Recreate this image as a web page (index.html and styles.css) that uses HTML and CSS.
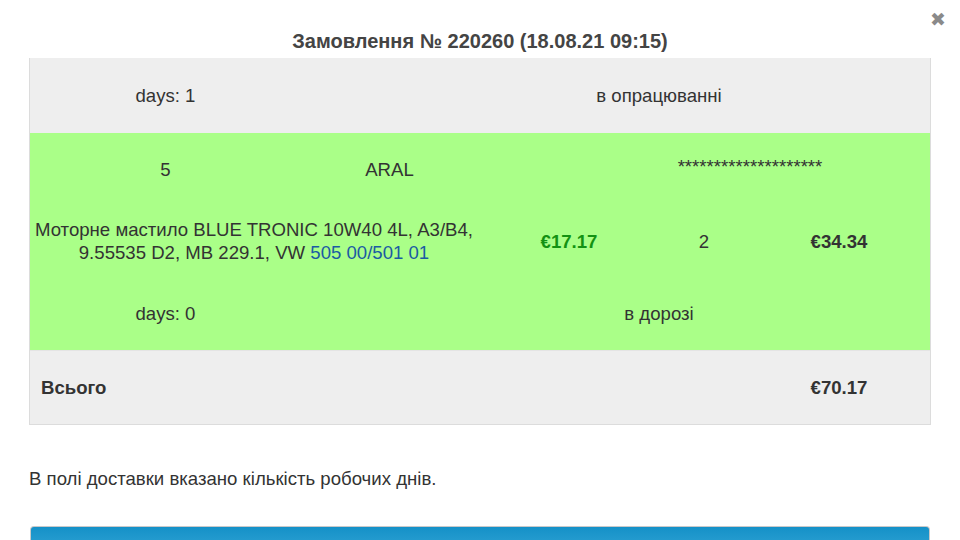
FILE: index.html
```html
<!DOCTYPE html>
<html lang="uk">
<head>
<meta charset="utf-8">
<title>Замовлення № 220260</title>
<link rel="stylesheet" href="styles.css">
</head>
<body>
<div class="modal">
  <span class="close">&#10006;</span>
  <h2 class="title">Замовлення № 220260 (18.08.21 09:15)</h2>
  <div class="table">
    <div class="row gray">
      <div class="cell c1">days: 1</div>
      <div class="cell c3-6">в опрацюванні</div>
    </div>
    <div class="row green">
      <div class="cell c1">5</div>
      <div class="cell c2">ARAL</div>
      <div class="cell c4-7 stars">********************</div>
    </div>
    <div class="row green">
      <div class="cell c1-2 desc">Моторне мастило BLUE TRONIC 10W40 4L, A3/B4, 9.55535 D2, MB 229.1, VW <a href="#" class="link">505 00/501 01</a></div>
      <div class="cell c3-4 price">€17.17</div>
      <div class="cell c5">2</div>
      <div class="cell c6-7 bold">€34.34</div>
    </div>
    <div class="row green">
      <div class="cell c1">days: 0</div>
      <div class="cell c3-6">в дорозі</div>
    </div>
    <div class="row gray total">
      <div class="cell c1 left bold">Всього</div>
      <div class="cell c6-7 bold">€70.17</div>
    </div>
  </div>
  <p class="note">В полі доставки вказано кількість робочих днів.</p>
  <button class="btn">Оформити</button>
</div>
</body>
</html>
```

FILE: styles.css
```css
html, body {
  margin: 0;
  padding: 0;
  background: #fff;
  overflow: hidden;
}
* { box-sizing: border-box; }
body {
  font-family: "Liberation Sans", Arial, sans-serif;
  color: #333;
  width: 960px;
  height: 540px;
}
.modal {
  position: relative;
  padding: 29px 29px 0 29px;
}
.close {
  position: absolute;
  top: 8px;
  right: 14px;
  font-size: 19px;
  color: #8a8a8a;
  font-family: "DejaVu Sans", sans-serif;
  font-weight: bold;
}
.title {
  margin: 0 0 5px 0;
  text-align: center;
  font-size: 20px;
  font-weight: bold;
  color: #444;
  line-height: 24px;
}
.table {
  border: 1px solid #dcdcdc;
  border-top: none;
  display: grid;
  grid-template-columns: 271px 177px 92px 90px 88px 92px 90px;
  width: 902px;
}
.row {
  display: grid;
  grid-column: 1 / -1;
  grid-template-columns: subgrid;
  align-items: center;
  font-size: 18.6px;
}
.gray { background: #eeeeee; height: 75px; }
.total { height: 74px; border-top: 1px solid #e4e4e4; }
.green { background: #aaff88; height: 72px; }
.green + .green { height: 72.5px; }
.cell { text-align: center; line-height: 23px; }
.c1 { grid-column: 1 / 2; }
.c2 { grid-column: 2 / 3; }
.c1-2 { grid-column: 1 / 3; }
.c3-4 { grid-column: 3 / 5; }
.c3-6 { grid-column: 3 / 7; }
.c4-7 { grid-column: 4 / 8; }
.c5 { grid-column: 5 / 6; }
.c6-7 { grid-column: 6 / 8; }
.left { text-align: left; padding-left: 11px; }
.bold { font-weight: bold; }
.price { font-weight: bold; color: #139213; }
.stars { margin-top: -5px; }
.desc { padding: 0 2px; }
.link { color: #1a5ba3; text-decoration: none; }
.note {
  margin: 42px 0 0 0;
  font-size: 18.6px;
  line-height: 24px;
}
.btn {
  display: block;
  margin: 35px 0 0 1px;
  width: 900px;
  height: 50px;
  border: 1px solid #c9c9c9;
  border-bottom: none;
  border-radius: 4px 4px 0 0;
  background: linear-gradient(#1591c8, #4ab4e0);
  color: #fff;
  font-family: "Liberation Sans", Arial, sans-serif;
  font-size: 20px;
  font-weight: bold;
  padding-top: 6px;
  text-align: center;
}
```
